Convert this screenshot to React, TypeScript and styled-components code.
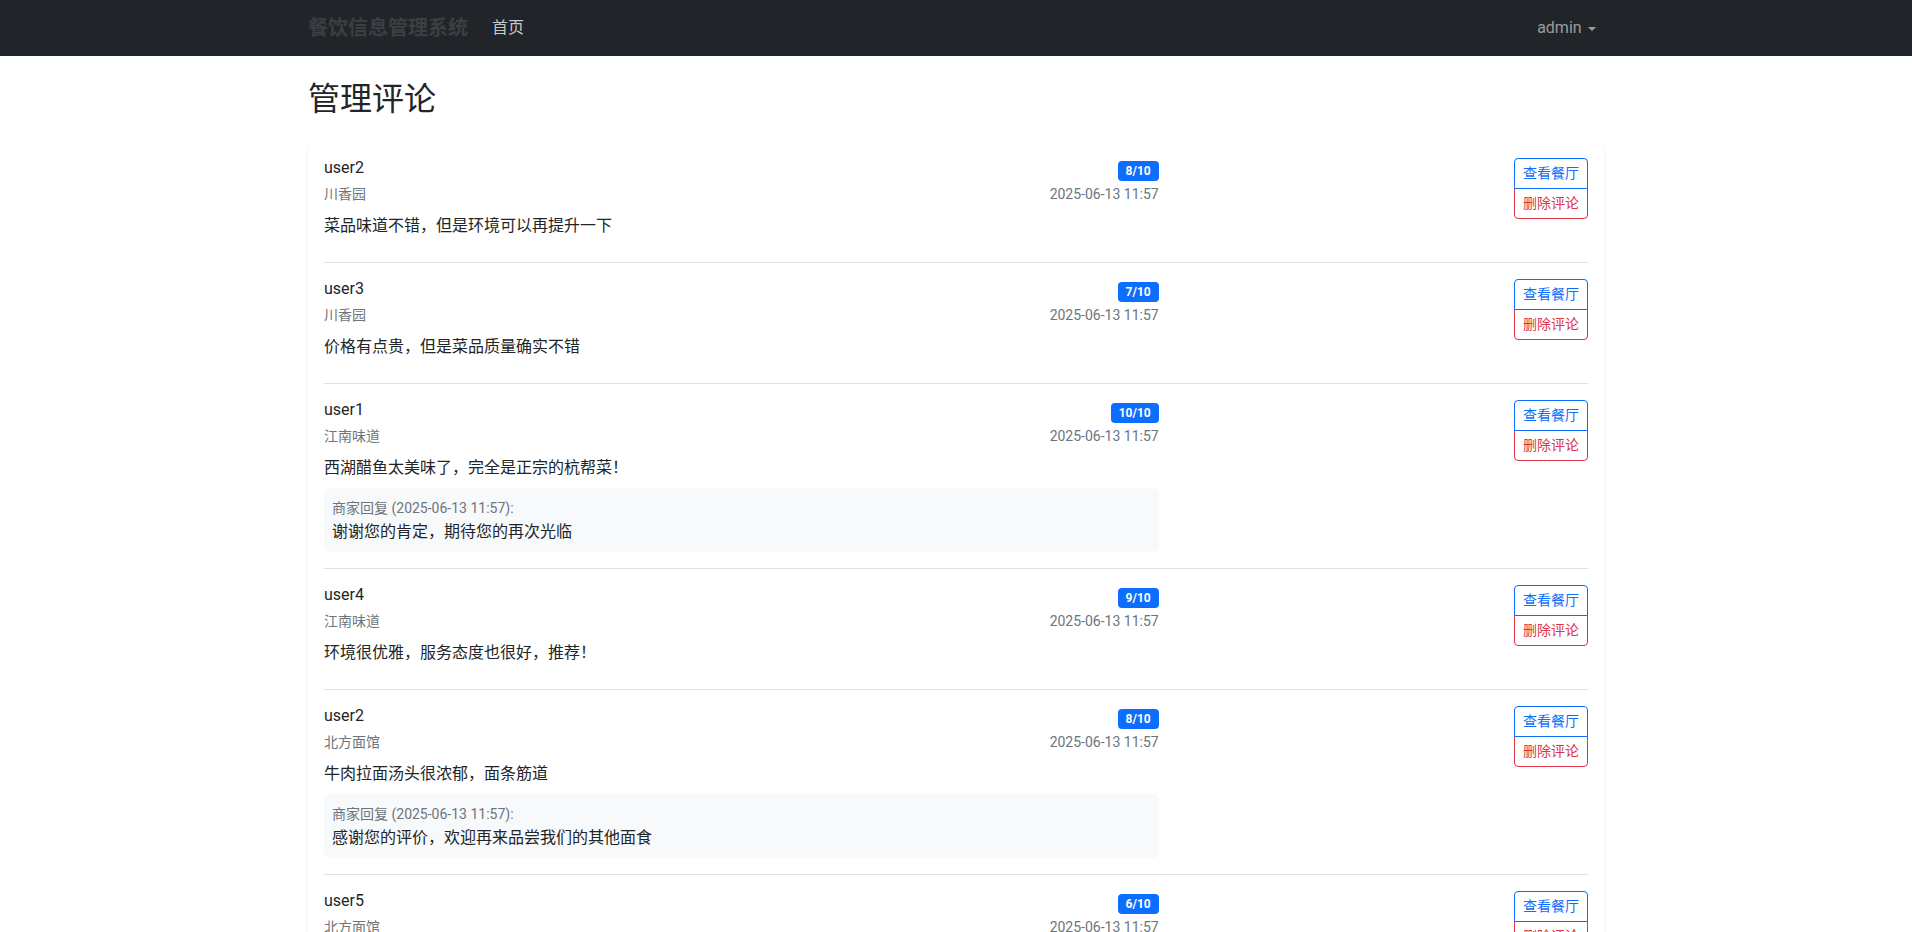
import React from "react";
import styled, { createGlobalStyle } from "styled-components";

const GlobalStyle = createGlobalStyle`
  *, *::before, *::after { box-sizing: border-box; }
  html {
    overflow-y: scroll;
  }
  html, body {
    margin: 0;
    padding: 0;
    background: #fff;
  }
  body {
    font-family: Roboto, "Noto Sans", "Noto Sans CJK SC", sans-serif;
    font-size: 16px;
    line-height: 1.5;
    color: #212529;
    -webkit-font-smoothing: antialiased;
  }
  ::-webkit-scrollbar {
    width: 17px;
    background: #f6f6f6;
  }
  ::-webkit-scrollbar-track {
    background: #f6f6f6;
  }
  ::-webkit-scrollbar-thumb {
    background: #8a8a8a;
    border: 4px solid #f6f6f6;
    border-radius: 9px;
  }
  ::-webkit-scrollbar-button:single-button {
    display: block;
    height: 14px;
    background: #f6f6f6;
  }
`;

type Review = {
  user: string;
  restaurant: string;
  score: number;
  time: string;
  content: string;
  reply?: { time: string; text: string };
};

const reviews: Review[] = [
  { user: "user2", restaurant: "川香园", score: 8, time: "2025-06-13 11:57", content: "菜品味道不错，但是环境可以再提升一下" },
  { user: "user3", restaurant: "川香园", score: 7, time: "2025-06-13 11:57", content: "价格有点贵，但是菜品质量确实不错" },
  {
    user: "user1",
    restaurant: "江南味道",
    score: 10,
    time: "2025-06-13 11:57",
    content: "西湖醋鱼太美味了，完全是正宗的杭帮菜！",
    reply: { time: "2025-06-13 11:57", text: "谢谢您的肯定，期待您的再次光临" },
  },
  { user: "user4", restaurant: "江南味道", score: 9, time: "2025-06-13 11:57", content: "环境很优雅，服务态度也很好，推荐！" },
  {
    user: "user2",
    restaurant: "北方面馆",
    score: 8,
    time: "2025-06-13 11:57",
    content: "牛肉拉面汤头很浓郁，面条筋道",
    reply: { time: "2025-06-13 11:57", text: "感谢您的评价，欢迎再来品尝我们的其他面食" },
  },
  { user: "user5", restaurant: "北方面馆", score: 6, time: "2025-06-13 11:57", content: "面条有点软，汤头偏咸，希望改进" },
  { user: "user1", restaurant: "川香园", score: 9, time: "2025-06-13 11:57", content: "麻婆豆腐很正宗，辣得过瘾！" },
  { user: "user3", restaurant: "江南味道", score: 8, time: "2025-06-13 11:57", content: "东坡肉肥而不腻，入口即化" },
  {
    user: "user4",
    restaurant: "北方面馆",
    score: 7,
    time: "2025-06-13 11:57",
    content: "性价比不错，就是等位时间有点长",
    reply: { time: "2025-06-13 11:57", text: "抱歉让您久等了，我们会尽快优化排队流程" },
  },
  { user: "user5", restaurant: "川香园", score: 8, time: "2025-06-13 11:57", content: "水煮鱼分量很足，朋友聚餐的好地方" },
  { user: "user2", restaurant: "江南味道", score: 9, time: "2025-06-13 11:57", content: "龙井虾仁清爽鲜嫩，下次还会再来" },
];

/* ---------- navbar ---------- */

const NavBar = styled.nav`
  background: #212529;
  padding: 8px 0;
`;

const Container = styled.div`
  width: 100%;
  max-width: 1320px;
  margin: 0 auto;
  padding: 0 12px;
`;

const NavInner = styled(Container)`
  display: flex;
  align-items: center;
`;

const Brand = styled.a`
  font-size: 20px;
  line-height: 30px;
  padding: 5px 0;
  margin-right: 16px;
  font-weight: 700;
  color: #3b3f43;
  text-decoration: none;
`;

const NavLink = styled.a<{ $active?: boolean }>`
  display: inline-flex;
  align-items: center;
  padding: 8px;
  font-size: 16px;
  line-height: 24px;
  color: ${(p) => (p.$active ? "rgba(255,255,255,0.76)" : "rgba(255,255,255,0.55)")};
  text-decoration: none;
`;

const UserMenu = styled.div`
  margin-left: auto;
`;

const Caret = styled.span`
  display: inline-block;
  margin-left: 0.4em;
  margin-top: 1px;
  border-top: 0.3em solid currentColor;
  border-right: 0.3em solid transparent;
  border-left: 0.3em solid transparent;
`;

/* ---------- page ---------- */

const Main = styled(Container)`
  margin-top: 24px;
  padding-bottom: 24px;
`;

const Title = styled.h2`
  margin: 0 0 24px;
  font-size: 32px;
  line-height: 1.2;
  font-weight: 400;
`;

const Card = styled.div`
  background: #fff;
  border-radius: 6px;
  box-shadow: 0 2px 4px rgba(0, 0, 0, 0.075);
`;

const CardBody = styled.div`
  padding: 16px;
`;

const ReviewItem = styled.div`
  margin-bottom: 16px;
  padding-bottom: 16px;
  border-bottom: 1px solid #dee2e6;
`;

const Row = styled.div`
  display: flex;
  margin: 0 -12px;
`;

const MainCol = styled.div`
  flex: 0 0 66.666667%;
  max-width: 66.666667%;
  padding: 0 12px;
`;

const ActionCol = styled.div`
  flex: 0 0 33.333333%;
  max-width: 33.333333%;
  padding: 0 12px;
  text-align: right;
`;

const Header = styled.div`
  display: flex;
  justify-content: space-between;
`;

const UserName = styled.h6`
  margin: 0 0 4px;
  font-size: 16px;
  line-height: 1.2;
  font-weight: 400;
`;

const Muted = styled.small`
  font-size: 14px;
  color: #6c757d;
`;

const Meta = styled.div`
  text-align: right;
`;

const ScoreBadge = styled.span`
  display: inline-block;
  padding: 4px 8px;
  font-size: 12px;
  font-weight: 700;
  line-height: 1;
  color: #fff;
  background: #0d6efd;
  border-radius: 4px;
  white-space: nowrap;
  vertical-align: baseline;
`;

const CommentText = styled.p`
  margin: 8px 0;
`;

const ReplyBox = styled.div`
  background: #f8f9fa;
  border-radius: 6px;
  padding: 8px;
`;

const ReplyText = styled.p`
  margin: 0;
`;

const ButtonGroup = styled.div`
  display: inline-flex;
  flex-direction: column;
  align-items: stretch;
`;

const ActionButton = styled.button<{ $tone: "primary" | "danger" }>`
  font-family: inherit;
  font-size: 14px;
  line-height: 1.5;
  padding: 4px 8px;
  background: #fff;
  cursor: pointer;
  color: ${(p) => (p.$tone === "primary" ? "#0d6efd" : "#dc3545")};
  border: 1px solid ${(p) => (p.$tone === "primary" ? "#0d6efd" : "#dc3545")};
  position: relative;

  &:first-child {
    border-radius: 4px 4px 0 0;
    z-index: 1;
  }
  &:last-child {
    border-radius: 0 0 4px 4px;
    margin-top: -1px;
  }
`;

function ReviewRow({ r }: { r: Review }) {
  return (
    <ReviewItem>
      <Row>
        <MainCol>
          <Header>
            <div>
              <UserName>{r.user}</UserName>
              <Muted>{r.restaurant}</Muted>
            </div>
            <Meta>
              <ScoreBadge>{r.score}/10</ScoreBadge>
              <br />
              <Muted>{r.time}</Muted>
            </Meta>
          </Header>
          <CommentText>{r.content}</CommentText>
          {r.reply && (
            <ReplyBox>
              <div>
                <Muted>商家回复 ({r.reply.time}):</Muted>
              </div>
              <ReplyText>{r.reply.text}</ReplyText>
            </ReplyBox>
          )}
        </MainCol>
        <ActionCol>
          <ButtonGroup>
            <ActionButton $tone="primary">查看餐厅</ActionButton>
            <ActionButton $tone="danger">删除评论</ActionButton>
          </ButtonGroup>
        </ActionCol>
      </Row>
    </ReviewItem>
  );
}

export default function App() {
  return (
    <>
      <GlobalStyle />
      <NavBar>
        <NavInner>
          <Brand href="#">餐饮信息管理系统</Brand>
          <NavLink href="#" $active>
            首页
          </NavLink>
          <UserMenu>
            <NavLink href="#">
              admin
              <Caret />
            </NavLink>
          </UserMenu>
        </NavInner>
      </NavBar>
      <Main>
        <Title>管理评论</Title>
        <Card>
          <CardBody>
            {reviews.map((r, i) => (
              <ReviewRow key={i} r={r} />
            ))}
          </CardBody>
        </Card>
      </Main>
    </>
  );
}
